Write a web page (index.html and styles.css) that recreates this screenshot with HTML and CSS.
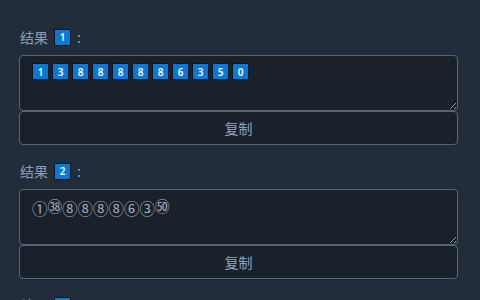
FILE: index.html
```html
<!DOCTYPE html>
<html lang="zh">
<head>
    <meta charset="UTF-8">
    <title>结果</title>
    <link rel="stylesheet" href="styles.css">
</head>
<body>
    <div class="panel">
        <div class="result">
            <div class="label">结果 <span class="key">1</span> :</div>
            <div class="output keys">
                <span class="key">1</span><span class="key">3</span><span class="key">8</span><span class="key">8</span><span class="key">8</span><span class="key">8</span><span class="key">8</span><span class="key">6</span><span class="key">3</span><span class="key">5</span><span class="key">0</span>
            </div>
            <button class="copy">复制</button>
        </div>

        <div class="result">
            <div class="label">结果 <span class="key">2</span> :</div>
            <div class="output circled">①<span class="small">㊳</span>⑧⑧⑧⑧⑥③<span class="small">㊿</span></div>
            <button class="copy">复制</button>
        </div>

        <div class="result">
            <div class="label">结果 <span class="key">3</span> :</div>
            <div class="output"></div>
            <button class="copy">复制</button>
        </div>
    </div>
</body>
</html>
```

FILE: styles.css
```css
:root {
    --bg: #222d3c;
    --field: #1a212b;
    --border: #56637a;
    --text: #8e9bb0;
    --blue: #0a78d6;
}
html, body {
    margin: 0;
    padding: 0;
    background-color: var(--bg);
    font-family: "Noto Sans CJK SC", "Noto Sans", sans-serif;
}
.panel {
    padding: 25px 22px 0 19px;
}
.result {
    margin-bottom: 14px;
}
.label {
    color: var(--text);
    font-size: 14px;
    line-height: 24px;
    height: 24px;
    padding-left: 1px;
    margin-bottom: 6px;
    display: flex;
    align-items: center;
    gap: 5px;
}
.label .key {
    margin: 0 1px;
}
.key {
    display: inline-flex;
    align-items: center;
    justify-content: center;
    width: 15px;
    height: 15px;
    background-color: var(--blue);
    border: 1px solid #0c1520;
    border-radius: 1px;
    color: #fff;
    font-family: "Noto Sans", sans-serif;
    font-size: 10px;
    font-weight: 600;
    line-height: 1;
}
.output {
    box-sizing: border-box;
    height: 56px;
    background-color: var(--field);
    border: 1px solid var(--border);
    border-radius: 4px;
    padding: 6px 12px;
    resize: vertical;
    overflow: auto;
    color: #a7afbd;
}
.keys {
    display: flex;
    gap: 3px;
    padding-top: 7px;
}
.circled {
    font-family: "Noto Sans CJK SC", sans-serif;
    font-size: 15.5px;
    line-height: 20px;
    padding-top: 6px;
}
.circled .small {
    font-size: 14.5px;
    vertical-align: 3px;
}
.copy {
    display: block;
    width: 100%;
    height: 34px;
    background-color: var(--field);
    border: 1px solid var(--border);
    border-radius: 4px;
    color: #8aa3c4;
    font-family: "Noto Sans CJK SC", sans-serif;
    font-size: 14px;
    cursor: pointer;
}
```
